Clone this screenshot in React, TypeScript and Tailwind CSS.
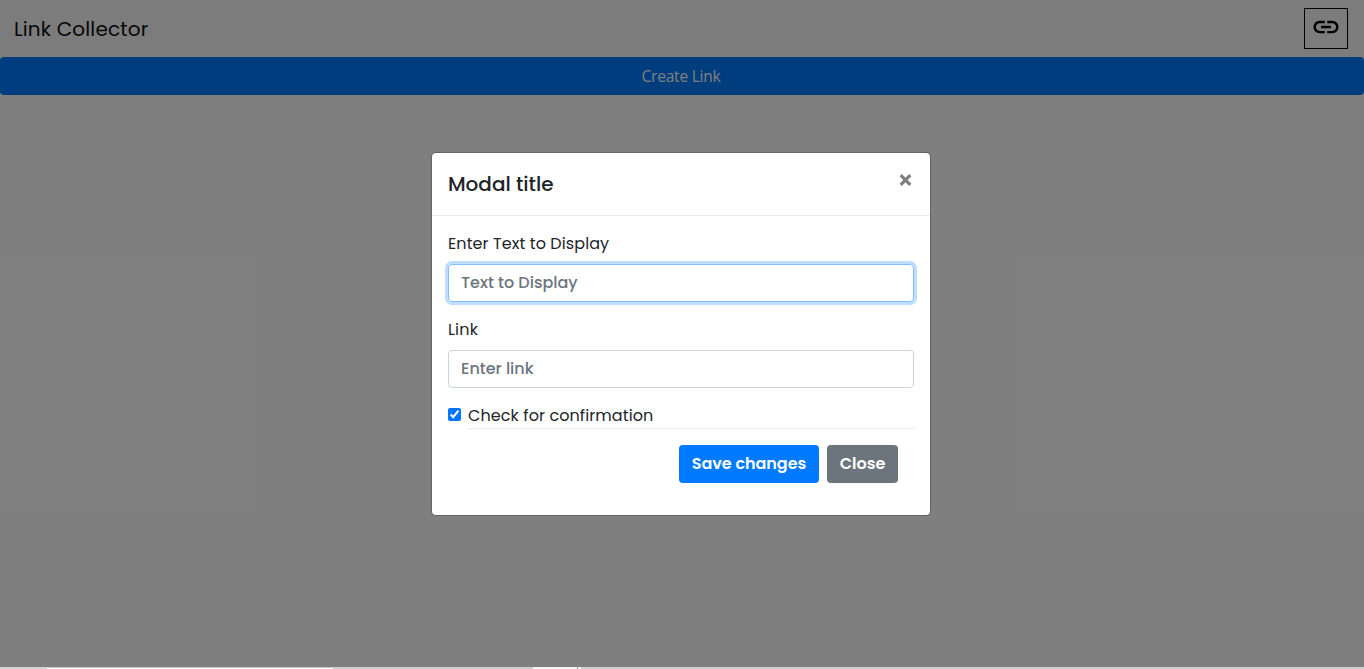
import React from "react";
import { MdLink } from "react-icons/md";

function Navbar() {
  return (
    <nav className="flex h-[57px] items-center justify-between bg-[#f8f9fa] pr-4 pl-[14px]">
      <a className="text-[20px] leading-[30px] tracking-[0.15px] whitespace-nowrap text-[#0c0c0c]">Link Collector</a>
      <button aria-label="Toggle links" className="flex h-[41px] w-[44px] items-center justify-center border border-black pb-[3px] text-black">
        <MdLink className="size-[30px]" />
      </button>
    </nav>
  );
}

function Modal() {
  return (
    <div role="dialog" className="h-[364px] w-[500px] rounded-[5px] border border-black/20 bg-white bg-clip-padding text-[#212529]">
      <div className="flex h-[63px] items-start justify-between border-b border-[#e9ecef] p-4">
        <h5 className="text-[20px] leading-[30px] font-medium tracking-[-0.02px]">Modal title</h5>
        <button aria-label="Close dialog" className="mt-[5px] mr-[2px] text-[#7f7f7f]">
          <svg width="13" height="12" viewBox="0 0 13 12" fill="none" stroke="currentColor" strokeWidth="3.1">
            <path d="M1.7 1.1 11.3 10.9M11.3 1.1 1.7 10.9" />
          </svg>
        </button>
      </div>
      <form className="px-4 pt-4">
        <label className="block h-6 text-[16px] leading-6 tracking-[0.09px]">Enter Text to Display</label>
        <input
          placeholder="Text to Display"
          className="mt-2 block h-[38px] w-full rounded-[4px] border border-[#80bdff] px-3 pb-[2px] text-[16px] font-medium shadow-[0_0_0_3px_#bfdeff] outline-none placeholder:text-[#6c757d]"
        />
        <label className="mt-4 block h-6 text-[16px] leading-6 tracking-[0.2px]">Link</label>
        <input
          placeholder="Enter link"
          className="mt-2 block h-[38px] w-full rounded-[4px] border border-[#ced4da] px-3 pb-[2px] text-[16px] font-medium outline-none placeholder:text-[#6c757d]"
        />
        <div className="mt-4 flex">
          <input type="checkbox" defaultChecked className="mt-1 mr-[7px] size-[13px] shrink-0 accent-[#0075ff]" />
          <div className="grow">
            <label className="block h-6 text-[16px] leading-6 tracking-[0.09px]">Check for confirmation</label>
            <div className="flex justify-end gap-2 border-t border-[#e9ecef] p-4">
              <button type="button" className="h-[38px] w-[140px] rounded-[4px] bg-[#007bff] pb-px text-[16px] font-semibold tracking-[-0.05px] whitespace-nowrap text-white">
                Save changes
              </button>
              <button type="button" className="h-[38px] w-[71px] rounded-[4px] bg-[#6c757d] pb-px text-[16px] font-semibold text-white">
                Close
              </button>
            </div>
          </div>
        </div>
      </form>
    </div>
  );
}

export default function App() {
  return (
    <div className="relative flex h-[669px] w-full flex-col overflow-hidden bg-white font-['Poppins','Inter',sans-serif]">
      <Navbar />
      <button className="h-[38px] w-full rounded-[4px] bg-[#007bff] pt-px pr-[2px] font-['Segoe_UI','Open_Sans',sans-serif] text-[15.5px] tracking-[-0.2px] text-white">
        Create Link
      </button>
      <div className="absolute inset-0 flex items-start justify-center bg-black/50 pt-[152px] pr-[2px]">
        <Modal />
      </div>
      <div className="absolute inset-x-0 bottom-0 flex h-[2px]">
        <div className="w-[47px] bg-[#d5d5d5]" />
        <div className="w-[286px] border-t border-[#c8c8c8] bg-white" />
        <div className="w-[200px] bg-[#cfcfcf]" />
        <div className="w-[44px] bg-[#f3f3f3]" />
        <div className="w-px bg-[#999999]" />
        <div className="w-[3px] bg-[#f3f3f3]" />
        <div className="grow bg-[#cfcfcf]" />
      </div>
    </div>
  );
}
